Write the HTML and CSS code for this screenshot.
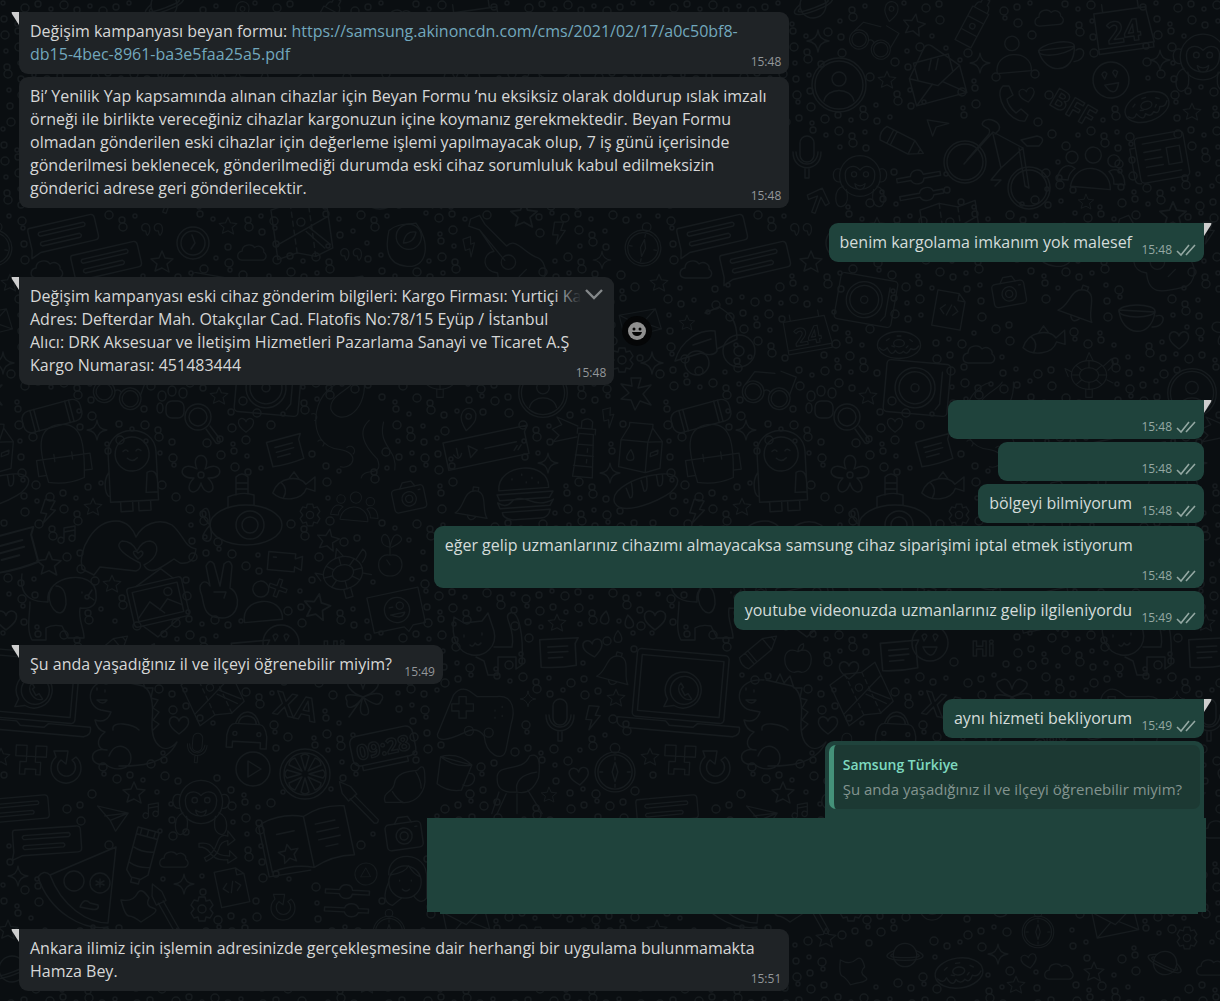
FILE: index.html
```html
<!DOCTYPE html>
<html lang="tr">
<head>
    <meta charset="UTF-8">
    <meta name="viewport" content="width=device-width, initial-scale=1.0">
    <title>Samsung Türkiye</title>
    <link rel="stylesheet" href="styles.css">
</head>
<body>
    <!-- wallpaper -->
    <svg class="wallpaper" aria-hidden="true">
        <defs>
            <path id="star" d="M0-11 3-4 11-3 5 2 7 10 0 6-7 9-5 2-11-3-3-4Z"/>
            <path id="sparkle" d="M0-11Q1-1 11 0Q1 1 0 11Q-1 1-11 0Q-1-1 0-11Z"/>
            <path id="heart" d="M0 9C-8 3-11-1-9-6C-6-10-1-8 0-4C1-8 6-10 9-6C11-1 8 3 0 9Z"/>
            <path id="cloud" d="M-11 8C-18 7-17-1-11-2C-11-10 0-11 3-6C8-10 14-5 13-1C18 3 15 8 11 8Z"/>
            <path id="bolt" d="M-5-12H5L2-3H7L-3 12-1 2H-7Z"/>
            <path id="drop" d="M0-7C7 2 4 6 0 6S-7 2 0-7Z"/>
            <path id="note" d="M-4 6V-6L7-8V4M-4-2 7-4M-4 6A3 3 0 1 1-5 4M7 4A3 3 0 1 1 6 2"/>
            <path id="pin" d="M0 12C-8 3-9-1-8-5A8 8 0 0 1 8-5C9-1 8 3 0 12ZM3-4A3 3 0 1 1-3-4A3 3 0 1 1 3-4"/>
            <path id="quotes" d="M-4 6C0 2 0-8-7-7C-12-5-11 2-6 1C-5 3-6 4-4 6ZM10 6C14 2 14-8 7-7C2-5 3 2 8 1C9 3 8 4 10 6Z"/>
            <path id="bubble" d="M-32-12H30Q34-12 34-8V10Q34 14 30 14H-26L-36 18-34 10V-8Q-34-12-32-12ZM-23-6H22Q25-4 22-2H-23Q-26-4-23-6ZM-23 4H16Q19 6 16 8H-23Q-26 6-23 4Z"/>
            <path id="note2" d="M-16-12H19L16-7V13Q0 15-16 13ZM-9-5H9M-9 0H9M-9 5H4"/>
            <path id="envelope" d="M-26-2-4-28Q0-32 4-28L26-2V26H-26ZM-26-2 0 12 26-2M-26 26-5 9M26 26 5 9M-18 2V-16H18V2M-5-5 0-15M2-4 7-14"/>
            <path id="letter" d="M-24-14H22L25 12-22 15ZM-24-14 0 3 22-14M-22 15-5 0M25 12 4 0"/>
            <g id="contact"><circle r="27"/><circle r="24"/><circle cy="-6" r="7"/><path d="M-15 16C-12 2 12 2 15 16"/></g>
            <g id="compass"><circle r="18"/><circle r="21"/><circle cy="-25" r="5"/><path d="M0-10 3 0 0 10-3 0ZM0-16V-13M0 16V13M-16 0H-13M16 0H13"/></g>
            <g id="clock"><circle r="16"/><circle r="12"/><path d="M-1-8 2 0-2 6"/></g>
            <g id="gear"><circle r="4"/><path d="M-3-12H3L4-8 8-9 11-4 8 0 11 4 8 9 4 8 3 12H-3L-4 8-8 9-11 4-8 0-11-4-8-9-4-8Z"/></g>
            <g id="donut"><ellipse rx="24" ry="15"/><ellipse cy="-2" rx="6" ry="4"/><path d="M-22 3Q-17 9-13 3Q-8 14-4 6Q0 12 5 7Q9 12 13 4Q18 7 22 1M-14-5-11-7M12-6 15-4M-8 1-5 2M8 3 10 1M-2-10 2-10"/></g>
            <g id="planet"><circle r="13"/><path d="M-12-5C-25 0-23 6 0 6S25 0 12-5M-14-1C-19 2-14 3 0 3S19 2 14-1"/></g>
            <g id="mic"><rect x="-7" y="-21" width="14" height="26" rx="7"/><path d="M-14-5C-14 16 14 16 14-5M-11-5C-10 11 10 11 11-5M-2 11V21H2V11"/></g>
            <g id="glasses"><circle cx="-16" cy="4" r="12"/><circle cx="-16" cy="4" r="9"/><circle cx="14" cy="4" r="12"/><circle cx="14" cy="4" r="9"/><path d="M-5 0Q-1-4 3 0M-26-3-20-18 2-22M24-3 26-24 8-26"/></g>
            <g id="monkey"><circle r="24"/><path d="M-17 3C-20-13-6-14 0-7C6-14 20-13 17 3C14 20-14 20-17 3ZM-6 9Q0 14 6 9Q5 16 0 16T-6 9Z"/><circle cx="-7" cy="-2" r="3"/><circle cx="7" cy="-2" r="3"/><path d="M-23-8C-34-12-34 8-24 7M23-8C34-12 34 8 24 7M-20 12C-32 16-30 38-22 36S-14 24-16 16M20 12C32 16 30 38 22 36S14 24 16 16"/></g>
            <g id="bike"><circle cx="-32" cy="2" r="21"/><circle cx="-32" cy="2" r="18"/><circle cx="32" cy="28" r="21"/><circle cx="32" cy="28" r="18"/><path d="M-33 4-4-28 26-12 4 8-4-26M-30 0-8-26C-4-34-18-32-14-38S6-38 2-30L-2-26M26-12 32 28 28 26 22-12M24-20 40-24Q50-22 42-14L30-14ZM4 8-6 20H4L-2 26"/></g>
            <g id="people"><circle cy="-15" r="8"/><circle cx="-21" cy="-11" r="6"/><circle cx="21" cy="-11" r="6"/><path d="M-20 18C-18-8 18-8 20 18ZM-34 12C-32-4-22-4-17 0Q-23 5-23 12ZM34 12C32-4 22-4 17 0Q23 5 23 12Z"/></g>
            <g id="person"><circle cy="-14" r="8"/><path d="M-19 18C-22-8 22-8 19 18Z"/></g>
            <g id="paper"><rect x="-26" y="-24" width="52" height="48" rx="4"/><rect x="6" y="-9" width="14" height="18"/><path d="M-26-14H-32V18Q-32 24-26 24M-18-17H18M-18-8H0M-18 0H0M-18 8H0M-18 17H18"/></g>
            <g id="pencil"><path d="M-23-8H10L24 0 10 8H-23Q-28 0-23-8ZM10-8V8M-15-8V8M-11-8V8M19-3V3"/></g>
            <g id="sliders"><path d="M-22-10H-8C-6-17 4-17 5-10H22V-6H5C4 0-6 0-8-6H-22ZM-22 8H-2C0 2 10 2 12 8H22V12H12C10 18 0 18-2 12H-22Z"/></g>
            <path id="arrow" d="M-2 15V-4L-10 3-13-1 0-14 13-1 10 3 2-4V15Z"/>
            <path id="cursor" d="M-12-8 12-4-2 0-6 10Z"/>
            <path id="plane" d="M-16-10 18-2 4 18-2 6ZM-2 6 18-2-8 1"/>
            <g id="map"><path d="M-28-24-8-28 10-22 28-26V22L10 28-8 22-28 26ZM-28 12 28-10M8-1 26 18M4 2 20 21"/><path stroke-dasharray="5 4" d="M-8-28V22M10-22V28"/><circle cy="-8" r="4"/></g>
            <g id="calendar"><path d="M-27-18H25L29 18H-27ZM-27 18V23H28V18M-18-18V-26M18-18V-26"/><text y="14" font-size="30" text-anchor="middle">24</text></g>
            <text id="bff" y="9" font-size="27" text-anchor="middle">BFF</text>
            <text id="hi" y="8" font-size="22" text-anchor="middle">Hi</text>
            <text id="lang" y="11" font-size="32" text-anchor="middle">XA</text>
            <g id="cup"><path d="M-20-10C-18 16 12 20 16-8ZM17-4C28-8 26 8 13 7"/><ellipse cx="-2" cy="-9" rx="18" ry="6"/></g>
            <g id="tube"><path d="M-10-16H10V26H-10ZM-8-16Q-8-24-4-24V-30H4V-24Q8-24 8-16M-10-4H10M-10 12H10"/><circle cy="4" r="3"/></g>
            <g id="smile"><circle r="18"/><path d="M-8-7Q-5-11-3-7L-6-2ZM3-7Q5-11 8-7L5-2ZM-7 4H7Q4 13 0 12T-7 4Z"/></g>
            <path id="phone" d="M-10-17C-20-8-4 20 12 18L15 12 8 6 3 10C-2 6-6 0-6-4L0-8-4-17Z"/>
            <path id="guitar" d="M-36-40-26-44-20-34 4-10C14-20 22-4 36 2C52 6 50 34 34 36C10 42-4 44-6 20C-24 18-24-2-10-4L-26-28-38-32ZM-26-28 2 6M14 8A8 8 0 1 1-2 8A8 8 0 1 1 14 8M18 24 26 16"/>
            <g id="avocado"><path d="M-20-14C-24 4-24 24 0 26S26-2 10-22C-2-20-10-22-20-14Z"/><circle cx="2" cy="-7" r="14"/><path d="M-4 0Q-2-14 10-12Q8 0-4 0Z"/></g>
            <g id="scooter"><circle cx="-12" cy="20" r="12"/><circle cx="30" cy="8" r="16"/><circle cx="30" cy="8" r="5"/><path d="M-34 18C-28-4-8-14 6-12L8 8Q4 14-8 10ZM8 6 28-4C28-24 20-30 10-36L-4-30M-16 2 2-4"/></g>
            <g id="record"><rect x="-32" y="-26" width="64" height="52" rx="4"/><circle cx="-2" r="20"/><circle cx="-2" r="16"/><circle cx="-2" r="4"/><path d="M24-18V14L20 20"/></g>
            <g id="magnifier"><circle r="13"/><circle r="9"/><path d="M8 12 18 26Q23 28 22 22L12 9"/></g>
            <g id="paw"><rect x="-8" y="-4" width="18" height="17" rx="6"/><ellipse cx="-14" cy="3" rx="3" ry="5"/><ellipse cx="-12" cy="-9" rx="4" ry="5"/><ellipse cx="-2" cy="-14" rx="4" ry="5"/><ellipse cx="9" cy="-12" rx="4" ry="5"/></g>
            <path id="flower" d="M-4-6C-12-24 12-24 4-6C20-16 26 4 7 3C20 16 4 24 0 8C-4 24-20 16-7 3C-26 4-20-16-4-6ZM3 0A3 3 0 1 1-3 0A3 3 0 1 1 3 0"/>
            <g id="fish"><path d="M-22 4C-14-12 8-10 12 0L22-6 20 8 12 4C6 16-14 14-22 4ZM-12-5Q-6 2-12 10M-4-8 2-14 6-6"/></g>
            <g id="submarine"><ellipse cy="12" rx="36" ry="20"/><circle cx="4" cy="12" r="14"/><circle cx="4" cy="12" r="8"/><path d="M-18-6V-16Q-4-22 8-18V-8M-10-18V-36Q-4-42 2-36V-19M-10-30H2M-10-24H2M-36 12Q-48 0-42-4T-36 12Q-48 26-40 28T-36 12"/></g>
            <g id="roll"><rect x="-30" y="-11" width="60" height="22" rx="8"/><path d="M-20-11V11M-16-11V11M20-11V11M16-11V11"/></g>
            <path id="backpack" d="M-20 28C-26-10-26-34 0-34S26-10 20 28Q0 34-20 28ZM-22 2H22M-22 2H-30V20H-21M22 2H30V20H21M-10-2V6M10-2V6"/>
            <g id="penguin"><path d="M-24 30V-18C-24-48 24-48 24-18V30ZM-24 0C-32 10-28 26-24 24M14 2Q24-2 24 12V22H12ZM-14 30V40H-2V30M4 30V40H16V30"/><circle cy="-17" r="17"/><path d="M-9-20Q-6-23-4-20M4-20Q6-23 9-20M-5-13Q0-8 5-13"/></g>
            <path id="hands" d="M-56 26C-60 6-44-22-22-22C-10-22-4-12-2-6C4-18 20-26 34-18C46-8 46 4 58 6Q56 22 42 20L36 16C24 24 12 34 6 22C22 14 22 0 12-2Q4-2-1 8Q-6-2-16-2C-26 4-10 14 2 20Q4 26-2 28L-38 24-44 32ZM0 16Q-8 8-2 8L0 10 3 8Q8 10 0 16Z"/>
            <path id="dog" d="M-38-32C-42-4-20-4-12-4C-16-32 36-38 36-12Q38 4 20 2C18 14 24 22 24 32H8L2 20Q-8 18-14 22V34H-28C-34 24-30 8-30-4M-8-18C-18-4 2 20 6-2C6-12 4-20-4-20M22-14V-13M32-16 28-10 34-6"/>
            <g id="picture"><rect x="-28" y="-20" width="56" height="40" rx="3"/><rect x="-23" y="-15" width="46" height="30"/><path d="M-23 12-8-2 4 12M0 8 10-1 23 8M-18-20 10-32 20-20M18 20-8 34-20 20"/><circle cx="12" cy="-8" r="4"/></g>
            <path id="victory" d="M-18 6C-24-8-14-12-10-4L-14-24Q-10-32-6-26L0-4 4-26Q10-32 12-24L10-2C22 4 20 28 2 28S-16 16-18 6ZM-6 2H6L4 8"/>
            <path id="plus" d="M-2-10H2V-2H10V2H2V10H-2V2H-10V-2H-2Z"/>
            <path id="video" d="M-17-9H10V-4L17-7V7L10 4V9H-17ZM-12-4H-9"/>
            <g id="turtle"><ellipse rx="22" ry="18"/><ellipse rx="12" ry="9"/><path d="M0-18V-9M0 18V9M-22 0H-12M22 0H12M-16-12-9-6M16-12 9-6M-16 12-9 6M16 12 9 6M18-11 28-20Q34-14 24-6M-22-4-30-8-26 2M-4 18V28H4V18M-4-18 0-28 5-18M22 6 30 10"/></g>
            <path id="radish" d="M0-6C-18-10-20 20 0 20S20-10 0-6ZM0-6V-16C-14-18-12-32-6-32Q0-30 0-16Q4-36 12-30T2-16M0 6-4 0"/>
            <g id="photomsg"><path d="M-30-20H28V20H14L8 26 4 20H-30Z"/><circle r="14"/><circle cx="4" cy="-4" r="4"/><path d="M-8-4H-4M-8 4H8Q4 12-8 4"/></g>
            <g id="camera"><rect x="-18" y="-12" width="36" height="26" rx="4"/><circle cy="1" r="8"/><circle cy="1" r="4"/><path d="M-8-12-4-18H6L9-12M12-7H14"/></g>
            <path id="snake" d="M-10-60C-50-50-56 20-14 24C14 28 4 50-12 46M18-60C20-20-14-4-24-26C-26-44 0-50 4-60M24-12C4 6 28 30 34 36C44 60 16 46 14 60M42-10C34 20 60 24 56 50M-48-20A4 4 0 0 1-44-12M-40 14A4 4 0 0 1-34 20M-4 22A4 4 0 0 1 4 30"/>
            <path id="voice" d="M-42-14H44L40-8V14H-42ZM-30-6V2M-34 0Q-30 8-26 0M-18-6V6L-10 0ZM-2 0H30M26 8 30 4M30 8 34 4"/>
            <path id="lighthouse" d="M-9 30-6-18H10L13 30ZM-8-18V-24H12V-18M-4-24V-32Q3-38 8-32V-24M-7-6H11M-8 6H12M-9 18H12M-8-26-32-34-26-26-36-20-28-14-34-6-8-14M5 2V-2M5 14V10"/>
            <path id="milk" d="M-24-6-16-22V-26H10V-22L22-8V22L6 28-24 24ZM-24-6H6L10-22M6-6V28M6-6 22-8M-12 4Q-4 16-12 16T-12 4M10 6 18 2V6L10 10Z"/>
            <path id="burger" d="M-26-4C-26-32 26-32 24-4ZM-28 0H28L24 6H-26ZM-28 8Q-20 14-14 8T4 8T28 8L24 14H-26ZM-24 18H24Q22 26 14 26H-14Q-24 24-24 18M-12-14V-15M-2-18V-19M8-14V-15M2-10V-11M14-9V-10"/>
            <path id="bell" d="M-18 12C-8 4-14-14 0-16S10 4 18 12ZM-3-16V-20H3V-16M-4 13Q0 20 5 13"/>
            <path id="bread" d="M-32 6C-34-8-6-16 18-14S36 2 20 8S-28 20-32 6ZM-18-6-16 4Q-12 6-12-10M-2-11-1 0Q3 2 4-13M14-13 14-3Q19 0 20-13"/>
            <path id="cat" d="M-34-26-24-20-6-22 0-30 6-12C10 4-4 14-16 12S-38-2-34-26ZM6 4H24C28-16 14-26 22-30S36-10 34 22L28 26V14H10V32H0L-4 18-12 14M-24-6V-8M-6-8V-10M-18 2Q-15 5-13 0Q-10 4-7 0"/>
            <g id="laptop"><rect x="-46" y="-42" width="92" height="68" rx="4"/><rect x="-41" y="-36" width="82" height="56"/><path d="M-60 28H-12L-8 32H16L20 28H62Q64 36 56 38H-54Q-62 36-60 28ZM-15 14-12 6A18 18 0 1 1-5 12Z"/><circle cx="4" cy="-4" r="14"/><path d="M0-11C-6-4 4 8 12 4L8-1 5 1 1-5 3-7Z"/></g>
            <path id="dino" d="M-10-42C-40-44-40-16-24-12L-14-10Q-18 2-30-2Q-28 8-20 10C-30 18-28 28-18 28M-8-42 18-36Q30-30 27 0C26 24 40 34 52 20C40 46 4 44-6 44M-18 28C-38 24-36 46-20 42C-10 50 6 48 6 36S-10 18-16 34M-12 8C-14-2 8 2 14 8M-28-32V-34M-20-30V-32M-28-22Q-22-16-18-22Z M2-40 6-48 10-39 16-46 20-34 28-34 26-24 33-22 28-14 34-10 28-2 34 2 28 8"/>
            <path id="apple" d="M0-7C-20-16-18 16-4 16Q0 14 4 16C18 16 20-16 0-7ZM0-7Q0-14 6-16Q8-10 0-7"/>
            <path id="gamepad" d="M-44 16-26-28Q-18-38-8-32L0-26H22C42-28 42-8 38 4L32 34C28 48 10 38 8 18Q0 6-14 14-44 28-44 16ZM-20-26H-12V-18H-4V-10H-12V-2H-20V-10H-28V-18H-20ZM20-10V-11M28-14V-15M28-4V-5M20-2V-3M-4 12A5 5 0 1 0-14 12A5 5 0 1 0-4 12M18 14A5 5 0 1 0 8 14A5 5 0 1 0 18 14"/>
            <path id="mug" d="M-18-14-14 16Q0 22 14 16L18-14ZM-18-14Q0-24 18-14Q0-6-18-14M17-4C28-8 28 12 14 10"/>
            <path id="chair" d="M-22-4C-24-24 6-10 14-30Q28-36 24-6Q16 14 0 10-22 12-22-4ZM-20 10-28 34M-12 12-22 34M0 12V34M12 8 28 34M0 10Q-4-8 22-12"/>
            <path id="creeper" d="M-16-16H-4V-4H-16ZM6-16H18V-4H6ZM-4-4H6V2H12V16H7V10H-5V16H-11V2H-4Z"/>
            <path id="refresh" d="M10-11A15 15 0 1 1-10-11L-12-17H2L0-4-5-8A9 9 0 1 0 6-8Z"/>
            <path id="car" d="M-20 4Q-18-8-12-8Q-8-20 0-20T12-8Q18-8 20 4V16H14V10H-14V16H-20ZM-12-8H12M-9-8Q-8-16 0-16T9-8M-10 2A2 2 0 1 1-14 2A2 2 0 1 1-10 2M14 2A2 2 0 1 1 10 2A2 2 0 1 1 14 2"/>
            <g id="play"><circle r="17"/><path d="M-5-8V8L8 0Z"/></g>
            <g id="orange"><circle r="25"/><circle r="21"/><path d="M0-4-4-18Q0-22 4-18ZM0 4-4 18Q0 22 4 18ZM-4 0-18-4Q-22 0-18 4ZM4 0 18-4Q22 0 18 4ZM3-3 10-16Q16-14 16-9ZM-3-3-10-16Q-16-14-16-9ZM3 3 10 16Q16 14 16 9ZM-3 3-10 16Q-16 14-16 9Z"/></g>
            <path id="clover" d="M0 0C-12-4-20-14-12-16Q-4-22 0-8Q4-22 12-16C20-14 12-4 0 0C20-8 22 0 18 4Q16 12 0 0Q10 18 2 18T0 0C-8 12-18 14-16 4Q-22-6 0 0M0 0-14 20"/>
            <g id="digital"><rect x="-32" y="-16" width="64" height="30" rx="7"/><path d="M-24 14V19H22V14"/><text y="8" font-size="21" text-anchor="middle">09:28</text></g>
            <path id="acorn" d="M-22 16C-26 4-14 6-12-4C-10-20 10-18 14-20Q22-30 22-12C24 4 12 18-4 16ZM-14 4Q-8 14-2 16M12-18Q18-8 18 0"/>
            <path id="pizza" d="M-42-10C-30 26 4 44 28 40M-42-10Q-36-18-30-12L36-40 28 36C8 36-18 20-30-12M4-6A10 10 0 1 1-16-6A10 10 0 1 1 4-6M30-4A10 10 0 1 1 10-4A10 10 0 1 1 30-4M20-8V0M16-6 24-2M24-6 16-2M0 20Q4 10 10 16L18 18Q20 24 10 22Z"/>
            <path id="paint" d="M-11-26H11V18L5 24H-5L-11 18ZM-11-19H11M-11-6Q0-2 11-6M-11 10Q0 14 11 10M-7-25V-20M0-25V-20M7-25V-20M4 24V29H-4V24"/>
            <path id="shuffle" d="M-20-4Q-8-6-4 2T14 10V4L22 12 12 18V14Q-2 16-8 6-12 0-20 0ZM-14 12Q-4 8 0-4T12-12V-18L20-8 12-2V-7Q4-6 2 2T-12 16Z"/>
            <path id="file" d="M-16-20H8L16-12V20H-16ZM8-20V-12H16M-5-5-10 0-5 5M5-5 10 0 5 5M2-6-2 6"/>
            <path id="book" d="M-42-24Q-20-30 0-22Q20-30 42-24V26Q20 22 0 30Q-20 22-42 26ZM0-22V30M-42-24-46-20V30L-4 32M-30-10H-12M10-12H30M10-4H32M10 4H32M16 12H28M-22 2-19 8-12 8-17 13-16 20-22 16-28 20-27 13-32 8-25 8Z"/>
            <path id="brush" d="M0-10 3 28M-6-10-3 28Q0 32 3 28M-9-9H3V-20L-3-32-9-20Z"/>
            <g id="girl"><circle r="18"/><path d="M-18-8C-20-36 26-36 24-4V18Q18 26 10 16M-18 0Q-28 22-14 26L-4 18M-16-8Q0-10 4-18Q10-8 17-6M-6-1V-2M7-1V-2M-3 8Q1 12 5 8"/></g>
            <path id="puzzle" d="M-6-15H4L1-5 14-8 6 1 14 12 3 8-2 17-6 7-16 6-8 0-16-9-5-7Z"/>
            <path id="blob" d="M-16-6Q-4-4 0-12T12-8Q8 0 16 2T10 12L4 16Q-4 10-8 10T-16-6Z"/>
            <pattern id="doodles" width="649" height="1150" patternUnits="userSpaceOnUse"></pattern>
        </defs>
        <rect class="fill" width="100%" height="100%" fill="url(#doodles)"/>
    </svg>

    <svg class="sprite" aria-hidden="true">
        <symbol id="checks" viewBox="0 0 20 13">
            <path d="M1 7 5 11 13 1M10 11 19 1" fill="none" stroke="currentColor" stroke-width="1.6"/>
        </symbol>
        <symbol id="tail" viewBox="0 0 8 13">
            <path d="M1 0H8V13L1 2Q0 0 1 0Z" fill="currentColor"/>
        </symbol>
    </svg>

    <main class="chat">
        <div class="group in">
            <div class="message wide">
                <svg class="tail"><use href="#tail"/></svg>
                <div class="text">Değişim kampanyası beyan formu: <a href="https://samsung.akinoncdn.com/cms/2021/02/17/a0c50bf8-db15-4bec-8961-ba3e5faa25a5.pdf">https://samsung.akinoncdn.com/cms/2021/02/17/a0c50bf8-<wbr><span class="nowrap">db15-4bec-8961-ba3e5faa25a5.pdf</span></a><span class="spacer"></span></div>
                <div class="meta">15:48</div>
            </div>
            <div class="message wide">
                <div class="text">Bi’ Yenilik Yap kapsamında alınan cihazlar için Beyan Formu ’nu eksiksiz olarak doldurup ıslak imzalı örneği ile birlikte vereceğiniz cihazlar kargonuzun içine koymanız gerekmektedir. Beyan Formu olmadan gönderilen eski cihazlar için değerleme işlemi yapılmayacak olup, 7 iş günü içerisinde gönderilmesi beklenecek, gönderilmediği durumda eski cihaz sorumluluk kabul edilmeksizin gönderici adrese geri gönderilecektir.<span class="spacer"></span></div>
                <div class="meta">15:48</div>
            </div>
        </div>

        <div class="group out">
            <div class="message">
                <svg class="tail"><use href="#tail"/></svg>
                <div class="text">benim kargolama imkanım yok malesef<span class="spacer"></span></div>
                <div class="meta">15:48 <svg class="checks"><use href="#checks"/></svg></div>
            </div>
        </div>

        <div class="group in">
            <div class="hovered">
                <div class="message">
                    <svg class="tail"><use href="#tail"/></svg>
                    <div class="text">Değişim kampanyası eski cihaz gönderim bilgileri: Kargo Firması: Yurtiçi Kargo<br>Adres: Defterdar Mah. Otakçılar Cad. Flatofis No:78/15 Eyüp / İstanbul<br>Alıcı: DRK Aksesuar ve İletişim Hizmetleri Pazarlama Sanayi ve Ticaret A.Ş<br>Kargo Numarası: 451483444<span class="spacer"></span></div>
                    <div class="meta">15:48</div>
                    <button class="menu-button" type="button" aria-label="Menü">
                        <svg width="18" height="11" viewBox="0 0 18 11"><path d="M1 1 9 9 17 1" fill="none" stroke="currentColor" stroke-width="2.4"/></svg>
                    </button>
                </div>
                <button class="react-button" type="button" aria-label="İfade bırak">
                    <svg width="18" height="18" viewBox="0 0 18 18"><circle cx="9" cy="9" r="9" fill="#8f8f8f"/><circle cx="6" cy="7" r="1.5" fill="#050505"/><circle cx="12" cy="7" r="1.5" fill="#050505"/><path d="M4 10H14Q13 14 9 14T4 10Z" fill="#050505"/></svg>
                </button>
            </div>
        </div>

        <div class="group out">
            <div class="message blank-long">
                <svg class="tail"><use href="#tail"/></svg>
                <div class="text">&nbsp;</div>
                <div class="meta">15:48 <svg class="checks"><use href="#checks"/></svg></div>
            </div>
            <div class="message blank-short">
                <div class="text">&nbsp;</div>
                <div class="meta">15:48 <svg class="checks"><use href="#checks"/></svg></div>
            </div>
            <div class="message">
                <div class="text">bölgeyi bilmiyorum<span class="spacer"></span></div>
                <div class="meta">15:48 <svg class="checks"><use href="#checks"/></svg></div>
            </div>
            <div class="message wide">
                <div class="text">eğer gelip uzmanlarınız cihazımı almayacaksa samsung cihaz siparişimi iptal etmek istiyorum<span class="spacer"></span></div>
                <div class="meta">15:48 <svg class="checks"><use href="#checks"/></svg></div>
            </div>
            <div class="message">
                <div class="text">youtube videonuzda uzmanlarınız gelip ilgileniyordu<span class="spacer"></span></div>
                <div class="meta">15:49 <svg class="checks"><use href="#checks"/></svg></div>
            </div>
        </div>

        <div class="group in">
            <div class="message">
                <svg class="tail"><use href="#tail"/></svg>
                <div class="text">Şu anda yaşadığınız il ve ilçeyi öğrenebilir miyim?<span class="spacer"></span></div>
                <div class="meta">15:49</div>
            </div>
        </div>

        <div class="group out">
            <div class="message">
                <svg class="tail"><use href="#tail"/></svg>
                <div class="text">aynı hizmeti bekliyorum<span class="spacer"></span></div>
                <div class="meta">15:49 <svg class="checks"><use href="#checks"/></svg></div>
            </div>
            <div class="reply">
                <div class="quote-box">
                    <blockquote class="quote">
                        <strong>Samsung Türkiye</strong>
                        <p>Şu anda yaşadığınız il ve ilçeyi öğrenebilir miyim?</p>
                    </blockquote>
                </div>
                <div class="cover"></div>
            </div>
        </div>

        <div class="group in">
            <div class="message wide">
                <svg class="tail"><use href="#tail"/></svg>
                <div class="text">Ankara ilimiz için işlemin adresinizde gerçekleşmesine dair herhangi bir uygulama bulunmamakta Hamza Bey.<span class="spacer"></span></div>
                <div class="meta">15:51</div>
            </div>
        </div>
    </main>

    <script src="script.js"></script>
</body>
</html>
```

FILE: styles.css
```css
* {
    box-sizing: border-box;
}

body {
    margin: 0;
    min-height: 100vh;
    background: #0a0e11;
    color: #d6d7d7;
    font-family: 'Segoe UI', 'Open Sans', 'Noto Sans', sans-serif;
    font-size: 16px;
    line-height: 23px;
}

.wallpaper {
    position: fixed;
    top: 0;
    left: 0;
    width: 100%;
    height: 100%;
    z-index: -1;
    fill: none;
    stroke: #161b1e;
    stroke-width: 1.4;
    stroke-linejoin: round;
    stroke-linecap: round;
    font-weight: 700;
}

.wallpaper .fill {
    stroke: none;
}

.sprite {
    position: absolute;
    width: 0;
    height: 0;
}

.chat {
    display: flex;
    flex-direction: column;
    gap: 15px;
    padding: 12px 16px 12px 19px;
}

.group {
    display: flex;
    flex-direction: column;
    gap: 3px;
}

.in {
    align-items: flex-start;
}

.out {
    align-items: flex-end;
    color: #d4dcda;
}

.message {
    position: relative;
    max-width: 65%;
    padding: 8px 8px 8px 11px;
    border-radius: 9px;
    background: #1f2326;
}

.out .message {
    background: #1f433c;
}

.wide {
    width: 65%;
}

.blank-long {
    width: 256px;
}

.blank-short {
    width: 206px;
}

.in .message:has(.tail) {
    border-top-left-radius: 0;
}

.out .message:has(.tail) {
    border-top-right-radius: 0;
}

.tail {
    position: absolute;
    top: 0;
    left: -8px;
    width: 8px;
    height: 13px;
    color: #cecece;
}

.out .tail {
    left: auto;
    right: -8px;
    transform: scaleX(-1);
}

.message a {
    color: #72a8bd;
    text-decoration: none;
}

.nowrap {
    white-space: nowrap;
}

/* keeps room for the time at the end of the last line */
.spacer {
    display: inline-block;
    width: 64px;
    height: 1px;
}

.in .spacer {
    width: 43px;
}

.meta {
    display: flex;
    align-items: center;
    justify-content: flex-end;
    gap: 4px;
    margin: -12px 0 -4px;
    color: #93979a;
    font-size: 12px;
    line-height: 16px;
}

.out .meta {
    color: #94a8a3;
}

.checks {
    width: 20px;
    height: 13px;
}

.hovered {
    display: flex;
    align-items: center;
    gap: 8px;
    width: 100%;
}

button {
    border: none;
    padding: 0;
    cursor: pointer;
}

.menu-button {
    position: absolute;
    top: 1px;
    right: 0;
    width: 60px;
    height: 32px;
    padding: 2px 11px 0 0;
    text-align: right;
    color: #84888a;
    border-radius: 9px;
    background: linear-gradient(to right, rgba(31, 35, 38, 0), #1f2326 45%);
}

.react-button {
    display: flex;
    align-items: center;
    justify-content: center;
    width: 30px;
    height: 30px;
    border-radius: 50%;
    background: #050607;
}

.reply {
    display: flex;
    flex-direction: column;
    align-items: flex-end;
    width: 65%;
}

.quote-box {
    padding: 4px 4px 9px;
    border-radius: 9px 9px 0 0;
    background: #1f433c;
}

.quote {
    margin: 0;
    padding: 8px 18px 8px 9px;
    border-left: 5px solid #449179;
    border-radius: 7px;
    background: #1c3933;
    color: #83948f;
    font-size: 15px;
    line-height: 24px;
}

.quote strong {
    display: block;
    color: #7fd9c0;
    font-size: 14px;
    font-weight: 600;
}

.quote p {
    margin: 0;
}

.cover {
    align-self: stretch;
    height: 94px;
    margin: 0 -2px 0 -7px;
    background: #1f433c;
}

.reply::after {
    content: "";
    align-self: stretch;
    height: 2px;
    margin: 0 6px;
    background: #1f433c;
}
```

FILE: script.js
```javascript
// name, x, y, rotation, scale
const doodles = [
    ["planet", 164, 5, -20, 1], ["glasses", 223, 42, 25, 0.8], ["sparkle", 169, 41, 0, 1], ["star", 265, 25, 10, 1],
    ["pin", 242, 12, 10, 0.8], ["contact", 190, 85, 0, 1], ["envelope", 286, 74, -15, 1], ["star", 238, 80, 0, 0.8],
    ["tube", 325, 23, 28, 0.9], ["cloud", 400, 18, -5, 0.9], ["calendar", 474, 28, -8, 1], ["monkey", 554, 57, 0, 0.95],
    ["sparkle", 331, 63, 0, 0.9], ["sparkle", 511, 60, 0, 0.9], ["person", 364, 56, -5, 0.9], ["cup", 411, 57, -10, 1],
    ["smile", 462, 80, -10, 1], ["phone", 364, 103, 0, 1], ["heart", 378, 95, -10, 0.8], ["bff", 424, 108, 30, 1],
    ["donut", 498, 107, -20, 0.95], ["star", 543, 112, 0, 0.8], ["cursor", 289, 127, 0, 0.9], ["pencil", 254, 143, 27, 0.95],
    ["mic", 158, 157, 0, 1], ["monkey", 211, 176, 0, 0.85], ["bike", 348, 160, 0, 1], ["people", 443, 170, 5, 1],
    ["paper", 513, 157, -10, 0.95], ["sliders", 271, 185, -10, 1], ["arrow", 169, 200, 20, 0.9], ["map", 302, 230, -8, 1],
    ["star", 437, 202, 0, 0.7], ["star", 524, 215, 0, 1.2], ["quotes", 151, 230, 0, 0.9], ["star", 162, 262, 0, 1],
    ["clock", 193, 243, 0, 1], ["bubble", 63, 233, -13, 1], ["bubble", 106, 260, -13, 1], ["cloud", 47, 270, 0, 1],
    ["star", 228, 226, 0, 0.8], ["cloud", 252, 253, 0, 0.9], ["quotes", 350, 255, 0, 0.9], ["avocado", 407, 243, 0, 0.9],
    ["compass", -6, 248, 10, 0.85], ["guitar", 503, 255, 0, 0.9], ["bolt", 470, 247, -20, 0.8],
    ["bolt", 559, 233, 0, 0.9], ["sparkle", 602, 260, 0, 0.8], ["star", 10, 283, 0, 0.8], ["letter", -9, 323, -10, 0.8],
    ["star", 38, 323, 0, 0.7], ["scooter", 60, 343, 0, 1], ["sparkle", 3, 363, 0, 1], ["gear", 622, 360, 0, 1],
    ["puzzle", -12, 393, 0, 1], ["contact", 543, 393, 0, 0.9], ["calendar", 158, 333, -10, 0.8], ["record", 217, 300, 10, 0.9],
    ["camera", 360, 293, -10, 0.9], ["file", 300, 310, 10, 0.9], ["bell", 430, 305, 20, 1], ["fish", 395, 340, -10, 1],
    ["cup", 490, 320, 0, 1], ["heart", 530, 340, 0, 1], ["donut", 250, 345, 0, 0.9], ["cloud", 330, 355, 0, 1],
    ["turtle", 440, 375, 0, 0.8], ["flower", 580, 330, 0, 0.9], ["glasses", 119, 392, 15, 0.9], ["record", 268, 388, 5, 1],
    ["magnifier", 198, 417, 0, 1], ["paw", 174, 405, 0, 1], ["star", 219, 396, 0, 0.8], ["heart", 246, 425, 0, 0.8],
    ["flower", 201, 475, 0, 1], ["note2", 285, 450, -15, 1], ["fish", 294, 486, -8, 1], ["submarine", 246, 513, 0, 1],
    ["gear", 310, 515, 0, 0.9], ["roll", 52, 416, -15, 1], ["backpack", 63, 455, -8, 0.9], ["sparkle", 97, 430, 0, 0.9],
    ["penguin", 133, 471, -3, 1], ["hands", 138, 543, 0, 1], ["bolt", 48, 512, 10, 1], ["star", 93, 507, 0, 0.8],
    ["note", 68, 534, 0, 1], ["note2", 12, 550, -15, 1.4], ["star", 49, 564, 0, 1.1], ["dog", 60, 606, 0, 1],
    ["picture", 158, 602, -13, 1], ["star", 112, 584, 0, 0.8], ["victory", 220, 590, 0, 1], ["person", 262, 603, -5, 1],
    ["plus", 278, 588, 20, 0.9], ["video", 285, 562, 5, 1], ["star", 317, 607, 10, 1.2], ["star", 328, 540, 10, 1],
    ["people", 355, 508, 5, 0.7], ["turtle", 343, 573, -15, 0.9], ["radish", 390, 560, 0, 0.8], ["photomsg", 397, 610, -12, 0.9],
    ["camera", 409, 498, -12, 0.9], ["snake", 350, 430, 0, 0.8], ["pin", 468, 420, 10, 0.9], ["voice", 487, 448, -12, 1],
    ["lighthouse", 583, 450, 5, 0.9], ["bolt", 609, 418, -15, 0.8], ["milk", -7, 447, 5, 0.9],
    ["burger", 525, 493, -4, 1], ["bell", 473, 505, 10, 0.9], ["bread", -4, 491, -10, 1],
    ["sparkle", 548, 463, 0, 0.9], ["sparkle", 610, 473, 0, 0.9], ["magnifier", 470, 560, 0, 1], ["heart", 540, 560, 0, 1],
    ["planet", 590, 560, 0, 1], ["cat", 488, 643, 0, 1], ["star", 557, 623, 0, 0.8], ["note2", 558, 652, -3, 1.1],
    ["heart", 593, 648, -10, 1], ["drop", 605, 618, 10, 1], ["drop", 629, 622, -10, 1], ["drop", 618, 637, 0, 0.9],
    ["heart", 6, 620, 0, 1.1], ["bell", 615, 670, 15, 0.9], ["laptop", 31, 694, 5, 1],
    ["dino", 125, 722, 0, 1], ["pencil", 111, 650, -40, 0.9], ["apple", 149, 658, 0, 0.9], ["note2", 250, 655, -5, 1.1],
    ["heart", 200, 670, 0, 1], ["smile", 281, 643, 0, 1], ["hi", 334, 648, 0, 1], ["gamepad", 477, 720, 0, 0.9],
    ["mic", 560, 720, 0, 1], ["bolt", 593, 718, 5, 1], ["star", 616, 698, 0, 0.8], ["compass", 615, 772, 0, 0.95],
    ["sparkle", 528, 699, 0, 0.7], ["mug", 453, 773, 15, 0.9], ["chair", 517, 783, 0, 0.9], ["star", 549, 795, 0, 0.7],
    ["heart", 579, 776, -5, 1], ["creeper", 30, 760, 3, 0.9], ["refresh", 66, 768, 0, 1], ["star", 1, 757, 0, 0.8],
    ["bubble", 18, 808, -5, 0.9], ["heart", 179, 725, 0, 1], ["mic", 197, 748, 5, 0.7], ["map", 213, 694, -25, 0.9],
    ["car", 247, 732, 3, 1], ["play", 253, 769, 0, 1], ["lang", 296, 707, 12, 1], ["clover", 363, 697, 0, 1],
    ["orange", 305, 774, 0, 1], ["digital", 383, 747, -12, 1], ["acorn", 405, 788, 0, 0.9], ["monkey", 201, 802, 0, 0.9],
    ["star", 134, 793, 0, 1], ["note", 152, 810, 0, 0.9], ["plane", 112, 815, 0, 0.9], ["bubble", 47, 840, -4, 1],
    ["pizza", 80, 887, 0, 1], ["paint", 142, 855, 15, 1], ["cloud", 174, 860, 0, 0.9], ["shuffle", 217, 847, 0, 0.9],
    ["file", 232, 887, -12, 0.9], ["book", 308, 838, -12, 1], ["camera", 404, 835, -8, 1], ["brush", 360, 802, -40, 0.9],
    ["play", 366, 874, 30, 0.65], ["girl", 405, 882, 0, 0.9], ["sliders", 347, 900, 3, 1], ["refresh", 283, 908, 0, 0.8],
    ["gear", 202, 909, 0, 1], ["sparkle", 184, 884, 0, 0.9], ["brush", 167, 909, -25, 0.9], ["blob", 137, 906, 0, 1],
    ["sparkle", 18, 876, 0, 0.9], ["mic", 455, 850, 0, 0.8], ["star", 520, 850, 0, 1], ["cloud", 570, 830, 0, 1],
    ["star", 177, 938, 0, 0.9], ["blob", 203, 970, 20, 0.9], ["planet", 256, 955, 0, 0.9], ["donut", 310, 973, -8, 1],
    ["sparkle", 349, 954, 0, 0.9], ["compass", 389, 932, 0, 0.75], ["letter", 466, 922, -8, 0.9], ["heart", 380, 961, -10, 0.8],
    ["cloud", 410, 972, 0, 0.9], ["star", 445, 972, 0, 0.9], ["planet", 516, 963, 25, 0.9], ["gear", 538, 938, 0, 0.9],
    ["star", 367, 985, 0, 0.8], ["cloud", 562, 968, 0, 0.9], ["planet", 12, 969, -20, 1], ["star", 8, 930, 0, 0.9]
];

const tileWidth = 649;
const svgNS = "http://www.w3.org/2000/svg";
const tile = document.getElementById("doodles");

// doodles that cross the left edge come back on the right one
doodles.filter(item => item[1] < 60).forEach(([name, x, ...rest]) => {
    doodles.push([name, x + tileWidth, ...rest]);
});

doodles.forEach(([name, x, y, angle, scale]) => {
    const use = document.createElementNS(svgNS, "use");
    use.setAttribute("href", "#" + name);
    use.setAttribute("transform", `translate(${x} ${y}) rotate(${angle}) scale(${scale})`);
    tile.appendChild(use);
});

// small rings between the doodles
const reach = {
    laptop: 60, hands: 52, bike: 50, dino: 46, book: 44, guitar: 42, gamepad: 42, pizza: 40, snake: 40, submarine: 40,
    bubble: 34, voice: 36, backpack: 32, penguin: 32, burger: 31, digital: 31,
    star: 14, sparkle: 12, heart: 13, drop: 10, bolt: 14, note: 13, quotes: 16, plus: 14, cloud: 19, gear: 15, pin: 14
};

for (let row = 0; row < 82; row++) {
    for (let col = 0; col < 46; col++) {
        const x = col * 14 + 7 + (row * 37 + col * 53) % 9 - 4;
        const y = row * 14 + 7 + (row * 29 + col * 41) % 9 - 4;
        const free = doodles.every(([name, dx, dy]) => Math.hypot(x - dx, y - dy) > (reach[name] || 27));
        if (free) {
            const ring = document.createElementNS(svgNS, "circle");
            ring.setAttribute("cx", x);
            ring.setAttribute("cy", y);
            ring.setAttribute("r", 2 + (row * 7 + col * 5) % 3);
            tile.appendChild(ring);
        }
    }
}
```
